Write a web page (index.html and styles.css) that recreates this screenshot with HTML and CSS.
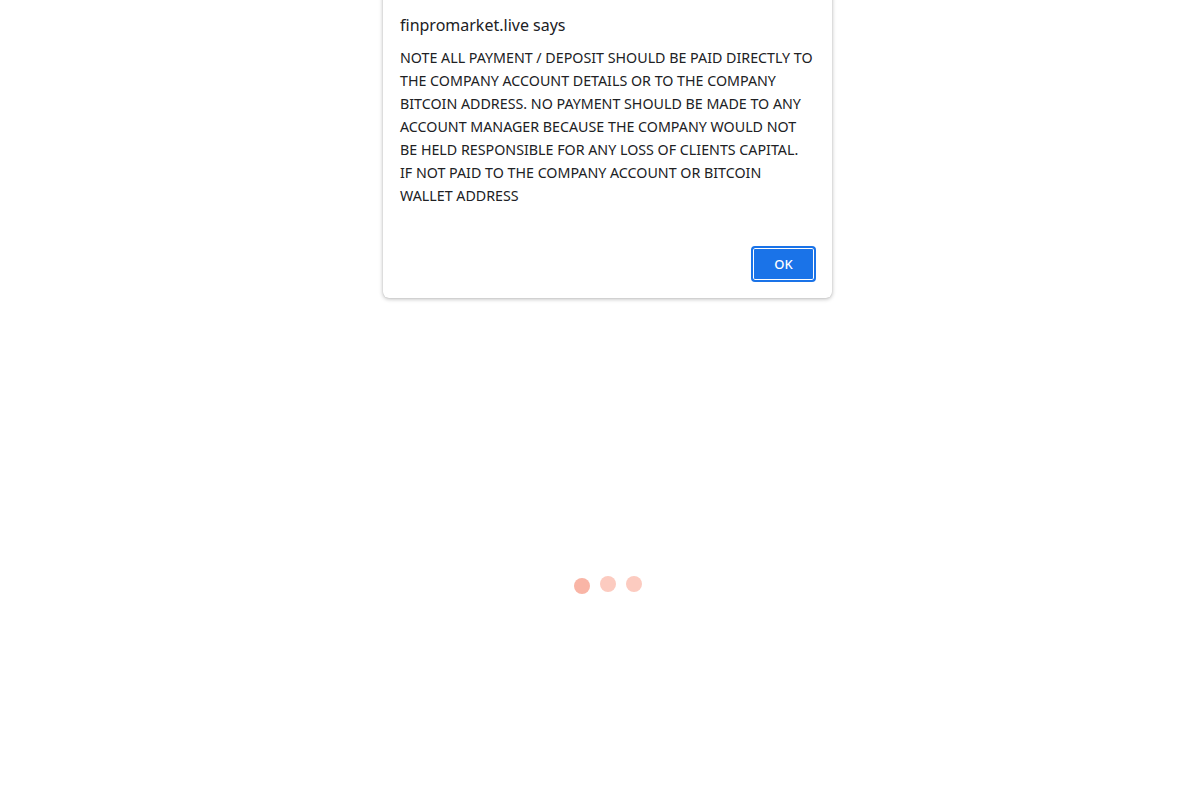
FILE: index.html
```html
<!DOCTYPE html>
<html>
<head>
<meta charset="utf-8">
<link rel="stylesheet" href="styles.css">
</head>
<body>
<div class="loader">
  <span class="dot dot-a"></span>
  <span class="dot dot-b"></span>
  <span class="dot dot-c"></span>
</div>
<div class="dialog">
  <div class="title">finpromarket.live says</div>
  <div class="message">NOTE ALL PAYMENT / DEPOSIT SHOULD BE PAID DIRECTLY TO THE COMPANY ACCOUNT DETAILS OR TO THE COMPANY BITCOIN ADDRESS. NO PAYMENT SHOULD BE MADE TO ANY ACCOUNT MANAGER BECAUSE THE COMPANY WOULD NOT BE HELD RESPONSIBLE FOR ANY LOSS OF CLIENTS CAPITAL.<br>IF NOT PAID TO THE COMPANY ACCOUNT OR BITCOIN WALLET ADDRESS</div>
  <div class="actions">
    <button class="ok">OK</button>
  </div>
</div>
</body>
</html>
```
FILE: styles.css
```css
html, body {
  margin: 0;
  padding: 0;
  background: #ffffff;
  width: 1200px;
  height: 800px;
  overflow: hidden;
  font-family: "Noto Sans", "Open Sans", sans-serif;
}
.loader {
  display: flex;
  justify-content: center;
  gap: 10px;
  padding-top: 576px;
  padding-left: 16px;
}
.dot {
  width: 16px;
  height: 16px;
  border-radius: 50%;
  background: #fccbc0;
}
.dot-a {
  background: #f9b5a6;
  margin-top: 2px;
}
.dialog {
  position: absolute;
  left: 383px;
  top: -8px;
  width: 416px;
  padding: 20px 16px 16px 17px;
  background: #ffffff;
  border-radius: 0 0 6px 6px;
  box-shadow: 0 1px 4px rgba(0,0,0,0.28), 0 0 1px rgba(0,0,0,0.2);
  color: #202124;
}
.title {
  font-size: 16px;
  line-height: 26px;
  margin-bottom: 8px;
}
.message {
  font-size: 14.25px;
  line-height: 23px;
  letter-spacing: 0;
}
.actions {
  display: flex;
  justify-content: flex-end;
  margin-top: 39px;
}
.ok {
  width: 65px;
  height: 36px;
  border: 2px solid #1a73e8;
  box-shadow: inset 0 0 0 1px #ffffff;
  background: #1a73e8;
  color: #ffffff;
  border-radius: 4px;
  font-family: "Noto Sans", "Open Sans", sans-serif;
  font-size: 13px;
  font-weight: 500;
  padding: 0;
}
```
